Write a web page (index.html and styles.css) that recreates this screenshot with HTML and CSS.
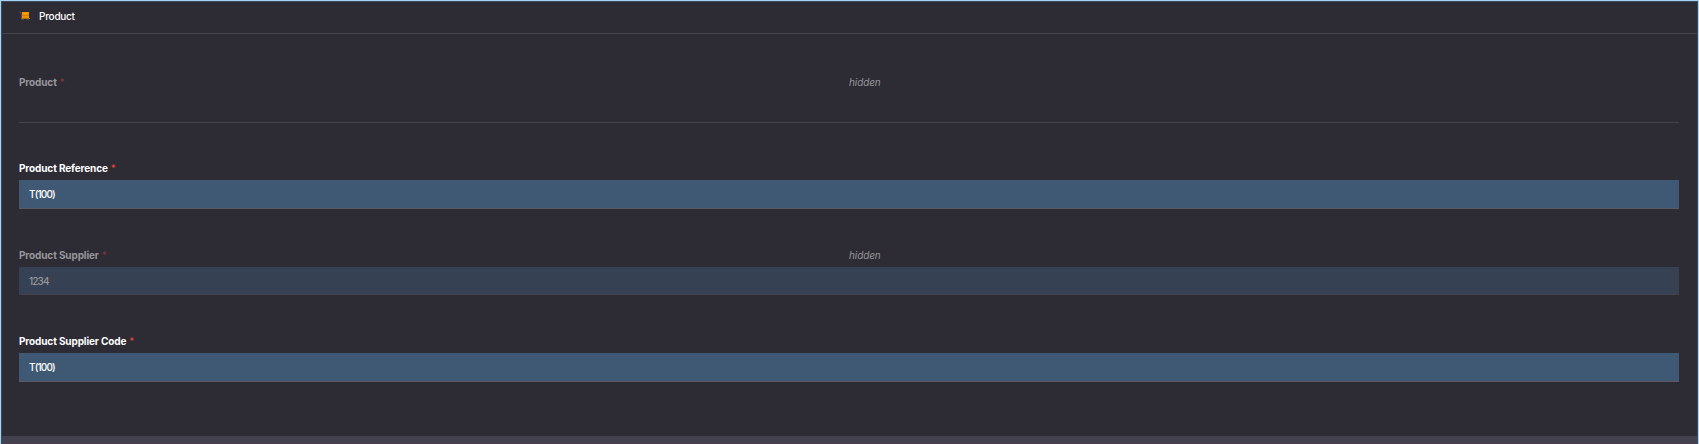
FILE: index.html
```html
<!DOCTYPE html>
<html lang="en">
<head>
<meta charset="utf-8">
<title>Product</title>
<link rel="stylesheet" href="styles.css">
</head>
<body>
<main class="panel">
  <header class="header">
    <svg class="icon" width="12" height="10" viewBox="0 0 12 10">
      <path d="M.5 1.5H2l1 7" fill="none" stroke="#4a5358"/>
      <rect x="3" y="1" width="7" height="7" fill="#f39200"/>
      <path d="M3 4.5h7" stroke="#d98000"/>
      <path d="M5 2.5h3" stroke="#ffa51d"/>
      <path d="M2 7.5h9" stroke="#a06f0b"/>
      <path d="M3 8.5h2M8 8.5h2" stroke="#46515a"/>
    </svg>
    <span class="title">Product</span>
  </header>
  <form class="fields">
    <section class="field muted empty">
      <div class="caption"><label class="name">Product</label><span class="star">*</span><em class="state">hidden</em></div>
    </section>
    <section class="field">
      <div class="caption"><label class="name">Product Reference</label><span class="star">*</span></div>
      <div class="value">T(100)</div>
    </section>
    <section class="field muted">
      <div class="caption"><label class="name">Product Supplier</label><span class="star">*</span><em class="state">hidden</em></div>
      <div class="value">1234</div>
    </section>
    <section class="field">
      <div class="caption"><label class="name">Product Supplier Code</label><span class="star">*</span></div>
      <div class="value">T(100)</div>
    </section>
  </form>
  <footer class="footer"></footer>
</main>
</body>
</html>
```
FILE: styles.css
```css
* { box-sizing: border-box; }
body {
  margin: 0;
  background: #2d2b34;
  color: #fff;
  font: 10px/12px Inter, "Liberation Sans", Arial, sans-serif;
}
.panel {
  height: 444px;
  border: 1px solid #a5d3f8;
  border-bottom: 0;
  display: flex;
  flex-direction: column;
  box-shadow: inset 1px 1px #3d4b58, inset -1px 0 #3d4b58;
}
.header {
  height: 33px;
  margin: 0 1px;
  padding: 0 17px 2px;
  border-bottom: 1px solid #44424c;
  display: flex;
  align-items: center;
  flex: none;
}
.icon { margin-right: 8px; }
.title { letter-spacing: -.25px; font-weight: 500; }
.fields {
  flex: 1;
  padding: 42px 19px 0 18px;
  display: flex;
  flex-direction: column;
}
.field { height: 87px; flex: none; }
.field.muted { height: 86px; }
.field.empty { height: 47px; margin-bottom: 39px; border-bottom: 1px solid #44424c; }
.caption {
  position: relative;
  height: 18px;
  display: flex;
}
.name { font-weight: 700; letter-spacing: -.12px; }
.star { margin-left: 3px; color: #e0443e; }
.state { position: absolute; left: 830px; color: #98979b; letter-spacing: -.1px; }
.value {
  height: 29px;
  padding: 8px 10px 0;
  background: #3f5974;
  border-bottom: 1px solid #5b5964;
  letter-spacing: -.85px;
  font-weight: 500;
}
.muted .name, .muted .value { color: #98979b; }
.muted .star { color: #84363a; }
.muted .value { background: #364153; border-color: #44424c; height: 28px; }
.footer { height: 8px; background: #44414e; border-bottom: 1px solid #4b3f4d; flex: none; margin: 0 1px; }
```
